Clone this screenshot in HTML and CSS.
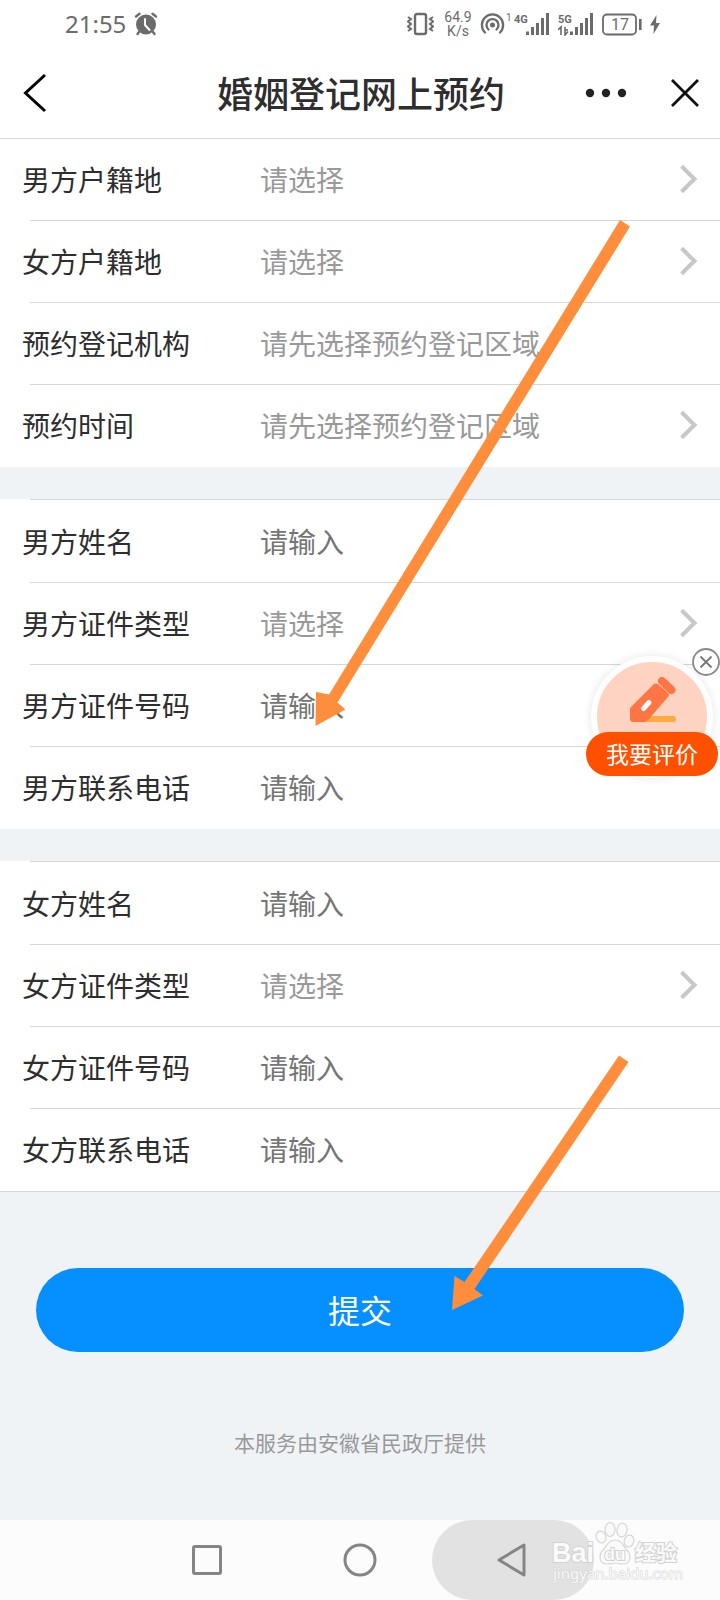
FILE: index.html
```html
<!DOCTYPE html>
<html lang="zh-CN">
<head>
<meta charset="utf-8">
<meta name="viewport" content="width=device-width, initial-scale=1">
<title>婚姻登记网上预约</title>
<link rel="stylesheet" href="styles.css">
</head>
<body>
<div class="screen">
  <div class="status">
    <div class="status-left">
      <span class="clock">21:55</span>
      <svg width="24" height="24" viewBox="0 0 24 24" aria-hidden="true">
        <g fill="none" stroke="#6b6b6b" stroke-width="2.4" stroke-linecap="round"><path d="M2 4.500L5.500 1.800M22 4.500L18.500 1.800M5 20L3.500 22M19 20L20.500 22"/></g>
        <circle cx="12" cy="12.500" r="10" fill="#6b6b6b"/>
        <path d="M11 7v6l4.500 5" fill="none" stroke="#fff" stroke-width="2" stroke-linecap="round"/>
      </svg>
    </div>
    <div class="status-right">
      <svg width="27" height="24" viewBox="0 0 27 24" aria-hidden="true">
        <rect x="8" y="2" width="11" height="20" rx="2" fill="none" stroke="#6b6b6b" stroke-width="2.400"/>
        <path d="M1 5l3 2-3 2.500 3 2.500-3 2.500 3 2.500-3 2M26 5l-3 2 3 2.500-3 2.500 3 2.500-3 2.500 3 2" fill="none" stroke="#6b6b6b" stroke-width="2"/>
      </svg>
      <span class="speed">64.9<br>K/s</span>
      <svg width="32" height="24" viewBox="0 0 32 24" aria-hidden="true">
        <g fill="none" stroke="#6b6b6b" stroke-width="2.300" stroke-linecap="round">
          <path d="M5 20.500a10.600 10.600 0 1 1 15 0"/>
          <path d="M8.500 17.500a6 6 0 1 1 8 0"/>
        </g>
        <circle cx="12.500" cy="13" r="2.500" fill="#6b6b6b"/>
        <text class="tiny" x="26" y="9">1</text>
      </svg>
      <svg class="cell" width="36" height="24" viewBox="0 0 36 24" aria-hidden="true">
        <text class="net" x="0" y="11">4G</text>
        <path d="M12 19.500h3V23h-3zM17 15h3v8h-3zM22 11h3v12h-3zM27 6h3v17h-3zM32 1h3v22h-3z" fill="#6b6b6b"/>
      </svg>
      <svg width="36" height="24" viewBox="0 0 36 24" aria-hidden="true">
        <text class="net" x="0" y="11">5G</text>
        <path d="M0 18l3-3v8M10 18H7v-3v8l3-3.500" fill="none" stroke="#6b6b6b" stroke-width="1.600"/>
        <path d="M12 19.500h3V23h-3zM17 15h3v8h-3zM22 11h3v12h-3zM27 6h3v17h-3zM32 1h3v22h-3z" fill="#6b6b6b"/>
      </svg>
      <svg width="40" height="24" viewBox="0 0 40 24" aria-hidden="true">
        <rect x="1" y="2.500" width="33" height="20" rx="4" fill="none" stroke="#6b6b6b" stroke-width="1.800"/>
        <rect x="37" y="7" width="2.600" height="11" fill="#6b6b6b"/>
        <text class="charge" x="18" y="18" text-anchor="middle">17</text>
      </svg>
      <svg width="10" height="24" viewBox="0 0 10 24" aria-hidden="true"><path d="M6.500 3L0 13.500h4L3.500 22 10 11H6z" fill="#6b6b6b"/></svg>
    </div>
  </div>

  <header class="titlebar">
    <button class="icon-btn" type="button" aria-label="返回">
      <svg width="24" height="40" viewBox="0 0 24 40"><path d="M22 2L2.500 20 22 38" fill="none" stroke="#000" stroke-width="3"/></svg>
    </button>
    <h1>婚姻登记网上预约</h1>
    <div class="titlebar-actions">
      <button class="icon-btn" type="button" aria-label="更多">
        <svg width="42" height="10" viewBox="0 0 42 10" fill="#222"><circle cx="5" cy="5" r="4.200"/><circle cx="21" cy="5" r="4.200"/><circle cx="37" cy="5" r="4.200"/></svg>
      </button>
      <button class="icon-btn" type="button" aria-label="关闭">
        <svg width="28" height="28" viewBox="0 0 28 28"><path d="M1 1l26 26M27 1L1 27" stroke="#111" stroke-width="2.800"/></svg>
      </button>
    </div>
  </header>

  <form class="form">
    <div class="group">
      <div class="row arrow"><label for="m-home">男方户籍地</label><select id="m-home"><option>请选择</option></select></div>
      <div class="row arrow"><label for="f-home">女方户籍地</label><select id="f-home"><option>请选择</option></select></div>
      <div class="row"><label for="office">预约登记机构</label><select id="office"><option>请先选择预约登记区域</option></select></div>
      <div class="row arrow"><label for="time">预约时间</label><select id="time"><option>请先选择预约登记区域</option></select></div>
    </div>
    <div class="group">
      <div class="row"><label for="m-name">男方姓名</label><input id="m-name" type="text" placeholder="请输入"></div>
      <div class="row arrow"><label for="m-type">男方证件类型</label><select id="m-type"><option>请选择</option></select></div>
      <div class="row"><label for="m-id">男方证件号码</label><input id="m-id" type="text" placeholder="请输入"></div>
      <div class="row"><label for="m-tel">男方联系电话</label><input id="m-tel" type="tel" placeholder="请输入"></div>
    </div>
    <div class="group">
      <div class="row"><label for="f-name">女方姓名</label><input id="f-name" type="text" placeholder="请输入"></div>
      <div class="row arrow"><label for="f-type">女方证件类型</label><select id="f-type"><option>请选择</option></select></div>
      <div class="row"><label for="f-id">女方证件号码</label><input id="f-id" type="text" placeholder="请输入"></div>
      <div class="row"><label for="f-tel">女方联系电话</label><input id="f-tel" type="tel" placeholder="请输入"></div>
    </div>
    <div class="submit-area">
      <button class="submit" type="submit">提交</button>
      <p class="provider">本服务由安徽省民政厅提供</p>
    </div>
  </form>

  <nav class="navbar">
    <button class="nav-btn" type="button" aria-label="最近任务"><svg width="34" height="34" viewBox="0 0 34 34"><rect x="3.500" y="3.500" width="27" height="27" rx="1.500" fill="none" stroke="#858585" stroke-width="3"/></svg></button>
    <button class="nav-btn" type="button" aria-label="主页"><svg width="34" height="34" viewBox="0 0 34 34"><circle cx="17" cy="17" r="15" fill="none" stroke="#858585" stroke-width="3"/></svg></button>
    <button class="nav-btn pressed" type="button" aria-label="返回上一级"><svg width="34" height="34" viewBox="0 0 34 34"><path d="M3 17L28 2V32z" fill="none" stroke="#858585" stroke-width="3" stroke-linejoin="round"/></svg></button>
    <svg class="watermark" width="136" height="68" viewBox="0 0 136 68" role="img" aria-label="Baidu 经验">
      <g fill="#fafafa" stroke="#d6d6d6" stroke-width="1.200">
        <ellipse cx="51" cy="17" rx="4.800" ry="6" transform="rotate(-20 51 17)"/>
        <ellipse cx="60" cy="9.500" rx="5" ry="7"/>
        <ellipse cx="72" cy="10" rx="5" ry="7" transform="rotate(8 72 10)"/>
        <ellipse cx="79" cy="21" rx="4.800" ry="6" transform="rotate(15 79 21)"/>
        <path d="M65 20c-7 0-8 6-12 10s-5 14 4 14c3 0 5-1 8-1s5 1 8 1c9 0 8-10 4-14s-5-10-12-10z"/>
      </g>
      <g class="mark">
        <text class="mark-bai" x="2" y="42">Bai</text>
        <text class="mark-du" x="65" y="40" text-anchor="middle">du</text>
        <text class="mark-cn" x="85" y="40">经验</text>
        <text class="mark-url" x="3" y="59">jingyan.baidu.com</text>
      </g>
    </svg>
  </nav>

  <aside class="rate">
    <div class="rate-disc">
      <svg width="48" height="48" viewBox="0 0 48 48" aria-hidden="true">
        <rect x="12" y="39" width="36" height="6" rx="3" fill="#ffab40"/>
        <path d="M2 32q0-1 1-2L26 7q2-1 4 0l10 9q2 2 0 4L20 43q-2 2-4 2H5q-3 0-3-3z" fill="#ff7544"/>
        <path d="M34 4L43.500 13" stroke="#ff7544" stroke-width="8" stroke-linecap="round"/>
        <path d="M15.500 31.500L21 25.500" stroke="#fff" stroke-width="5" stroke-linecap="round"/>
      </svg>
    </div>
    <button class="rate-btn" type="button">我要评价</button>
    <button class="rate-close" type="button" aria-label="关闭评价">
      <svg width="28" height="28" viewBox="0 0 28 28"><circle cx="14" cy="14" r="13" fill="#fff" stroke="#888" stroke-width="1.800"/><path d="M8.500 8.500l11 11M19.500 8.500l-11 11" stroke="#777" stroke-width="1.800"/></svg>
    </button>
  </aside>

  <svg class="pointers" width="720" height="1600" viewBox="0 0 720 1600" aria-hidden="true">
    <g fill="#ff8e3c">
      <path d="M620 220L630 226.500 337.500 702.500 345.500 709.500 315.500 726 316 692 329 694.500z"/>
      <path d="M619 1055.500L628.500 1062 474.500 1289 483 1295.500 452 1310 454.500 1276 464.500 1282z"/>
    </g>
  </svg>
</div>
</body>
</html>
```

FILE: styles.css
```css
* {
  box-sizing: border-box;
}

body {
  margin: 0;
  background: #eff3f6;
  color: #2e2e2e;
  font-family: "Noto Sans CJK SC", sans-serif;
  font-size: 28px;
}

button,
input,
select {
  margin: 0;
  padding: 0;
  border: 0;
  background: none;
  font: inherit;
}

svg {
  display: block;
  flex: none;
}

.screen {
  position: relative;
  display: flex;
  flex-direction: column;
  min-height: 100vh;
  overflow: hidden;
}

.status {
  display: flex;
  justify-content: space-between;
  align-items: center;
  height: 48px;
  padding: 0 60px 0 65px;
  background: #fff;
  color: #6b6b6b;
}

.status-left,
.status-right {
  display: flex;
  align-items: center;
  gap: 8px;
}

.clock {
  font: 24px/32px "Noto Sans", sans-serif;
}

.speed {
  width: 28px;
  margin-left: 2px;
  font: 14px/14px Roboto, sans-serif;
  text-align: center;
}

.cell {
  margin-left: -6px;
}

.tiny,
.net,
.charge {
  fill: #6b6b6b;
  font-family: Roboto, sans-serif;
}

.tiny {
  font-size: 10px;
}

.net {
  font-size: 11px;
  font-weight: 700;
}

.charge {
  font-size: 16px;
}

.titlebar {
  display: grid;
  grid-template-columns: 1fr auto 1fr;
  align-items: center;
  height: 91px;
  padding: 0 21px 0 23px;
  border-bottom: 1px solid #d6d6d6;
  background: #fff;
}

.titlebar h1 {
  margin: 0;
  padding-bottom: 2px;
  color: #2e2e2e;
  font-family: KaiTi, STKaiti, "Noto Sans CJK SC", serif;
  font-size: 36px;
  font-weight: 500;
  line-height: 48px;
}

.titlebar-actions {
  display: flex;
  align-items: center;
  justify-content: flex-end;
  gap: 44px;
}

.icon-btn {
  justify-self: start;
}

.form {
  flex: 1;
}

.group {
  background: #fff;
}

.group + .group {
  margin-top: 32px;
  padding-top: 2px;
  background: linear-gradient(#d6d6d6, #d6d6d6) 30px 0 / 100% 1px no-repeat #fff;
}

.group:nth-child(3) {
  border-bottom: 1px solid #d6d6d6;
}

.row {
  display: flex;
  align-items: center;
  height: 82px;
  padding: 0 22px 2px;
  background: linear-gradient(#d6d6d6, #d6d6d6) 30px 100% / 100% 1px no-repeat;
}

.row:last-child {
  background: none;
}

.row label {
  flex: none;
  width: 238px;
  line-height: 40px;
}

.row input,
.row select {
  flex: 1;
  min-width: 0;
  height: 48px;
  appearance: none;
  outline: 0;
}

.row select {
  color: #999;
}

.row input::placeholder {
  color: #757575;
  opacity: 1;
}

.row.arrow::after {
  content: "";
  width: 16px;
  height: 16px;
  margin-right: 5px;
  border: solid #c7c7cb;
  border-width: 4px 4px 0 0;
  transform: rotate(45deg);
}

.submit-area {
  padding: 76px 36px 0;
}

.submit {
  display: block;
  width: 100%;
  height: 84px;
  padding-bottom: 2px;
  border-radius: 42px;
  background: #058fff;
  color: #fff;
  font-size: 32px;
}

.provider {
  margin: 74px 0 0;
  color: #999;
  font-size: 21px;
  line-height: 32px;
  text-align: center;
}

.navbar {
  position: relative;
  display: grid;
  grid-template-columns: repeat(3, 153px);
  justify-content: center;
  height: 80px;
  background: #fcfcfc;
}

.nav-btn {
  display: flex;
  align-items: center;
  justify-content: center;
}

.nav-btn.pressed {
  justify-self: center;
  width: 162px;
  border-radius: 40px;
  background: #e2e2e2;
}

.watermark {
  position: absolute;
  right: 34px;
  top: 0;
}

.mark {
  fill: #fafafa;
  stroke: #d2d2d2;
  stroke-width: 2px;
  paint-order: stroke;
}

.mark-bai {
  font: 700 27px "Liberation Sans", sans-serif;
}

.mark-du {
  font: 700 17px "Liberation Sans", sans-serif;
}

.mark-cn {
  font: 700 21px "Noto Sans CJK SC", sans-serif;
}

.mark-url {
  stroke-width: 1px;
  font: 15px "Noto Sans", sans-serif;
}

.rate {
  position: absolute;
  top: 656px;
  right: 2px;
  display: flex;
  flex-direction: column;
  align-items: center;
  width: 132px;
}

.rate-disc {
  display: flex;
  justify-content: center;
  width: 122px;
  height: 122px;
  padding-top: 15px;
  border: 6px solid #fff;
  border-radius: 50%;
  background: #ffd3c1;
  box-shadow: 0 0 8px rgba(60, 80, 120, 0.15);
}

.rate-btn {
  width: 100%;
  height: 44px;
  margin-top: -46px;
  padding-bottom: 2px;
  border-radius: 22px;
  background: #ff5000;
  color: #fff;
  font-size: 23px;
  line-height: 42px;
}

.rate-close {
  position: absolute;
  top: -8px;
  right: -2px;
}

.pointers {
  position: absolute;
  top: 0;
  left: 0;
  pointer-events: none;
}
```
